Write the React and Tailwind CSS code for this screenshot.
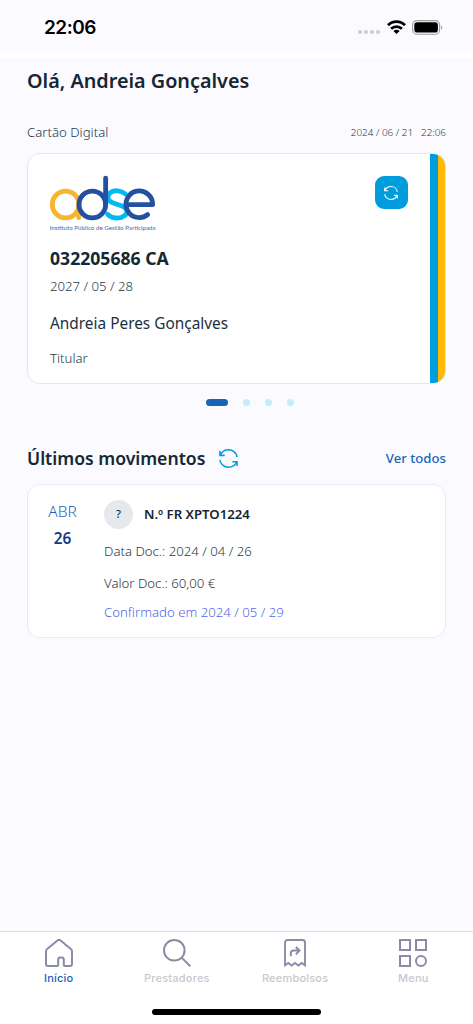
const tabs = [
  { label: 'Início', icon: HomeIcon, active: true },
  { label: 'Prestadores', icon: SearchIcon },
  { label: 'Reembolsos', icon: RefundIcon },
  { label: 'Menu', icon: MenuIcon },
];

function HomeIcon() {
  return (
    <svg width="28" height="28" viewBox="0 0 28 28" fill="none" stroke="#8b8ba7" strokeWidth="2" strokeLinejoin="round">
      <path d="M1 12.2c0-.8.3-1.400.9-1.900L12.400 1.600c.9-.8 2.300-.8 3.200 0l10.500 8.700c.6.5.9 1.100.9 1.900V25c0 1.100-.9 2-2 2h-5.200c-.6 0-1-.4-1-1v-5.500c0-1.100-.9-2-2-2h-1.600c-1.100 0-2 .9-2 2V26c0 .6-.4 1-1 1H3c-1.100 0-2-.9-2-2z" />
    </svg>
  );
}

function SearchIcon() {
  return (
    <svg width="28" height="28" viewBox="0 0 28 28" fill="none" stroke="#8b8ba7" strokeWidth="2">
      <circle cx="11.300" cy="11.300" r="10.300" />
      <path d="M18.600 18.600l8.700 8.700" />
    </svg>
  );
}

function RefundIcon() {
  return (
    <svg width="28" height="28" viewBox="0 0 28 28" fill="none" stroke="#8b8ba7" strokeWidth="2">
      <path d="M4 26.300V3.500C4 2.100 5.100 1 6.500 1h15C22.900 1 24 2.100 24 3.500v22.800l-3.300-2.300-3.300 2.600-3.400-2.600-3.400 2.600-3.300-2.600z" strokeWidth="1.900" />
      <path d="M9.800 17.300v-2.800c0-1.700 1.200-2.900 2.900-2.900h5M14.900 8l3.600 3.600-3.600 3.600" />
    </svg>
  );
}

function MenuIcon() {
  return (
    <svg width="28" height="28" viewBox="0 0 28 28" fill="none" stroke="#8b8ba7" strokeWidth="2">
      <rect x="1" y="1" width="10" height="10" />
      <rect x="17" y="1" width="10" height="10" />
      <rect x="1" y="17" width="10" height="10" />
      <circle cx="22" cy="22" r="5" />
    </svg>
  );
}

function RefreshIcon({ className }) {
  return (
    <svg className={className} viewBox="0 0 20 20" fill="none" stroke="currentColor" strokeWidth="1.600">
      <path d="M1.400 6.300C2.900 3 6.100.8 10 .8c4.600 0 8.500 3.200 9 7.600M1 2v4.700h5" />
      <path d="M18.600 13.700C17.100 17 13.900 19.200 10 19.200c-4.600 0-8.500-3.200-9-7.600M19 18v-4.700h-5" />
    </svg>
  );
}

function AdseLogo() {
  return (
    <svg className="block overflow-visible" width="105.300" height="55" viewBox="0 0 316 165" fill="none" strokeWidth="14.500" strokeLinecap="round">
      <g stroke="#f7b52c">
        <circle cx="47" cy="85.500" r="40" />
        <path d="M86 85v40" />
      </g>
      <path d="M226 54C214 43 193 41 181 50c-13 11-8 25 9 31l26 9c17 6 19 20 8 29-14 11-39 9-51-4" stroke="#00b9f2" />
      <g stroke="#2350a0">
        <circle cx="127" cy="85.500" r="40" />
        <path d="M167 6.500V85" />
        <path d="M230 86h78A40 40 0 1 0 293 116" strokeLinejoin="round" />
      </g>
      <text x="-1" y="161" textLength="318" lengthAdjust="spacingAndGlyphs" fontSize="18" fontFamily="Lato, sans-serif" fill="#4a69b0">
        Instituto Público de Gestão Participada
      </text>
    </svg>
  );
}

function StatusBar() {
  return (
    <div className="flex h-[52px] items-center justify-between pl-[44px] pr-[30px] pt-[2px]">
      <span className="pt-px font-['Inter'] text-[19px] font-semibold leading-6 tracking-[-0.5px] text-black">22:06</span>
      <div className="flex items-center">
        <div className="mr-[7px] mt-[10px] flex gap-[2px]">
          <i className="size-1 rounded-full bg-[#c9c9ce]" />
          <i className="size-1 rounded-full bg-[#c9c9ce]" />
          <i className="size-1 rounded-full bg-[#c9c9ce]" />
          <i className="size-1 rounded-full bg-[#c9c9ce]" />
        </div>
        <svg className="mr-[6.500px]" width="19" height="14" viewBox="0 0 19 14" fill="none" stroke="#000" strokeWidth="2.700">
          <path d="M1 5.200C5.800.4 13.200.4 18 5.200M4.100 8.700c3-2.900 7.800-2.900 10.800 0" />
          <path d="M6.400 10.900c1.800-1.600 4.400-1.600 6.200 0L9.500 14z" fill="#000" stroke="none" />
        </svg>
        <svg width="31" height="15" viewBox="0 0 31 15">
          <rect x=".6" y=".6" width="27" height="13.600" rx="4.200" fill="none" stroke="#9c9ca1" strokeWidth="1.100" />
          <rect x="2.300" y="2.300" width="23.600" height="10.200" rx="2.800" />
          <path d="M29 5.200c1.700.8 1.700 3.600 0 4.400z" fill="#9c9ca1" />
        </svg>
      </div>
    </div>
  );
}

function DigitalCard() {
  return (
    <div className="flex h-[231px] overflow-hidden rounded-[13px] border border-[#e5e7ee] bg-white">
      <div className="flex flex-1 justify-between pl-[22px] pr-[22.500px] pt-[22px]">
        <div className="whitespace-nowrap">
          <AdseLogo />
          <p className="mt-[15px] text-[17.600px] font-bold leading-6 text-[#142733]">032205686 CA</p>
          <p className="mt-[6px] text-[13.200px] font-light leading-5 text-[#263945]">2027 / 05 / 28</p>
          <p className="mt-[16px] text-[15.400px] leading-6 text-[#1c303c]">Andreia Peres Gonçalves</p>
          <p className="mt-[12px] text-[13.200px] font-light leading-5 text-[#263945]">Titular</p>
        </div>
        <button className="flex size-[33px] items-center justify-center rounded-[9px] bg-[#009ddc] text-white">
          <RefreshIcon className="size-[14px]" />
        </button>
      </div>
      <div className="w-2 bg-[#009ddc]" />
      <div className="w-[7px] bg-[#ffb900]" />
    </div>
  );
}

function MovementCard() {
  return (
    <div className="flex h-[154px] whitespace-nowrap rounded-[13px] border-[1.500px] border-[#e9ebf0] bg-white">
      <div className="w-[76px] pt-[15px]">
        <p className="pr-[7px] text-center text-[15.400px] font-light leading-6 text-[#1b63b8]">ABR</p>
        <p className="mt-[3px] pr-[7px] text-center text-[15.400px] font-semibold leading-6 text-[#123a86]">26</p>
      </div>
      <div className="pt-[15px] text-[13.200px] font-light text-[#263945]">
        <div className="flex items-center gap-[11px]">
          <span className="flex size-[29px] items-center justify-center rounded-full bg-[#e5e8ec] text-[11px] font-medium text-[#142733]">?</span>
          <span className="pb-px text-[13.200px] font-semibold leading-5 text-[#142733]">N.º FR XPTO1224</span>
        </div>
        <p className="mt-[12px] leading-5">Data Doc.: 2024 / 04 / 26</p>
        <p className="mt-[12px] leading-5">Valor Doc.: 60,00 €</p>
        <p className="mt-[9px] leading-5 text-[#4f67ee]">Confirmado em 2024 / 05 / 29</p>
      </div>
    </div>
  );
}

export default function App() {
  return (
    <div className="flex h-[1024px] w-[473px] flex-col overflow-hidden bg-[#fbfaff] font-['Noto_Sans',sans-serif]">
      <StatusBar />
      <div className="h-[6px] bg-white" />

      <main className="flex-1 px-[27px] pt-[9px]">
        <h1 className="text-[19.800px] font-semibold leading-7 text-[#142733]">Olá, Andreia Gonçalves</h1>

        <div className="mb-[11px] mt-[27px] flex items-center justify-between font-light leading-5 text-[#263945]">
          <h2 className="text-[13.200px]">Cartão Digital</h2>
          <div className="flex gap-2 text-[9.900px]">
            <span>2024 / 06 / 21</span>
            <span>22:06</span>
          </div>
        </div>

        <DigitalCard />

        {/* Carousel dots */}
        <div className="mt-[15px] flex items-center gap-[15px] pl-[178.500px]">
          <span className="h-[7px] w-[22px] rounded-full bg-[#1964b7]" />
          <span className="size-[7px] rounded-full bg-[#c6eaf9]" />
          <span className="size-[7px] rounded-full bg-[#c6eaf9]" />
          <span className="size-[7px] rounded-full bg-[#c6eaf9]" />
        </div>

        <div className="mb-[12px] mt-[38px] flex h-7 items-center">
          <h2 className="w-[191.500px] whitespace-nowrap text-[17.600px] font-semibold text-[#142733]">Últimos movimentos</h2>
          <RefreshIcon className="size-[19px] text-[#009ddc]" />
          <a className="ml-auto pt-px text-[13.200px] font-medium text-[#1964b7]">Ver todos</a>
        </div>

        <MovementCard />
      </main>

      <nav className="h-[93px] border-t border-[#dcdce0] bg-white">
        <div className="grid grid-cols-4">
          {tabs.map(({ label, icon: Icon, active }) => (
            <div key={label} className="flex flex-col items-center pr-px pt-[7px]">
              <Icon />
              <span
                className={
                  active
                    ? "mt-[3px] font-['Inter'] text-[11px] font-medium leading-4 tracking-[0.2px] text-[#1964b7]"
                    : "mt-[3px] font-['Inter'] text-[11px] font-medium leading-4 tracking-[0.2px] text-[#c6c9ce]"
                }
              >
                {label}
              </span>
            </div>
          ))}
        </div>
        {/* Home indicator */}
        <div className="mx-auto mt-[23px] h-[6px] w-[169px] rounded-full bg-black" />
      </nav>
    </div>
  );
}
